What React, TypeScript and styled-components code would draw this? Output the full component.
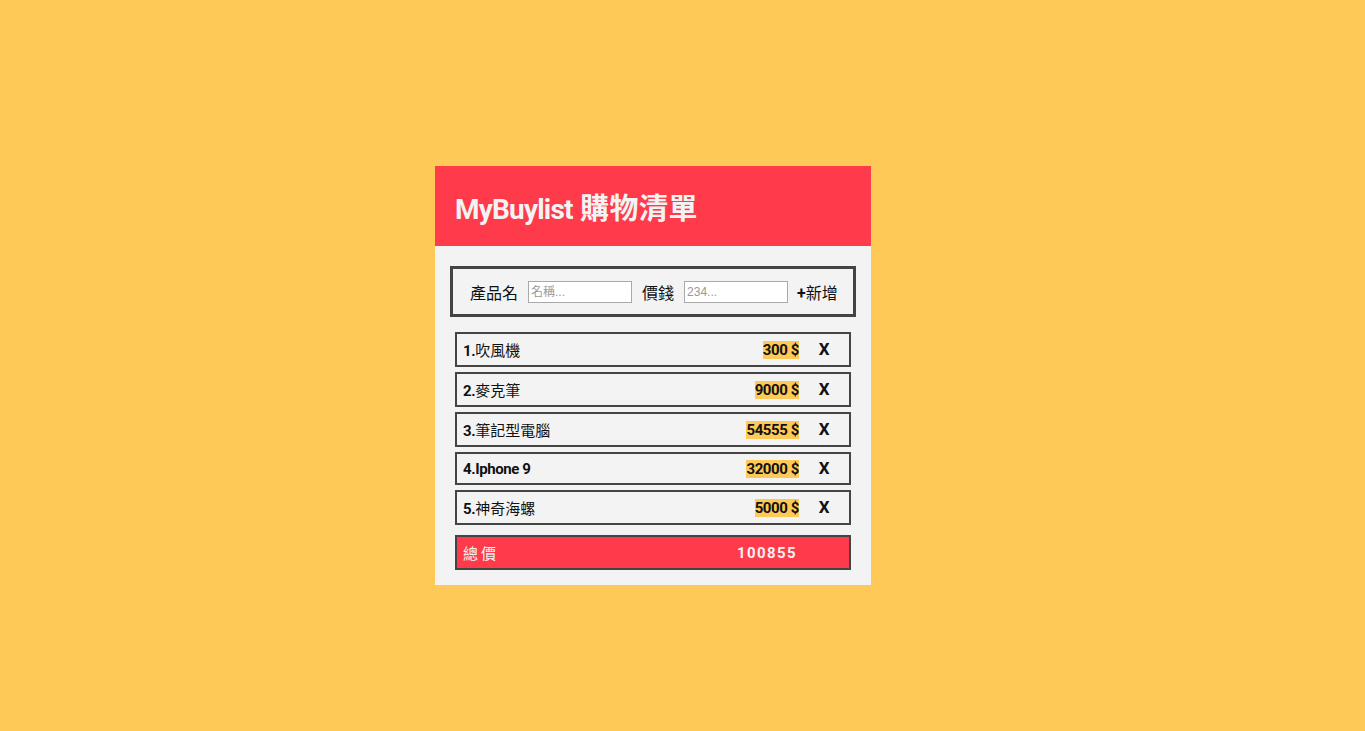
import React from "react";
import styled, { createGlobalStyle } from "styled-components";

const GlobalStyle = createGlobalStyle`
  html, body {
    margin: 0;
    padding: 0;
    background: #ffc957;
    font-family: "Roboto", "Noto Sans CJK TC", sans-serif;
  }
`;

const items = [
  { name: "吹風機", price: 300 },
  { name: "麥克筆", price: 9000 },
  { name: "筆記型電腦", price: 54555 },
  { name: "Iphone 9", price: 32000 },
  { name: "神奇海螺", price: 5000 },
];

const splitRuns = (text: string) =>
  text.match(/[\u3400-\u9fff]+|[^\u3400-\u9fff]+/g) || [];

const App = () => {
  const total = items.reduce((sum, it) => sum + it.price, 0);
  return (
    <>
      <GlobalStyle />
      <Page>
        <Card>
          <Header>
            <Title>
              MyBuylist <Cjk>購物清單</Cjk>
            </Title>
          </Header>
          <Body>
            <AddForm>
              <Label>產品名</Label>
              <Input placeholder="名稱..." />
              <Label>價錢</Label>
              <Input placeholder="234..." />
              <AddButton>
                <b>+</b>新增
              </AddButton>
            </AddForm>
            <List>
              {items.map((it, i) => (
                <Item key={i}>
                  <ItemName>
                    {i + 1}.
                    {splitRuns(it.name).map((run, j) => (
                      <Run key={j} $cjk={/[\u3400-\u9fff]/.test(run)}>
                        {run}
                      </Run>
                    ))}
                  </ItemName>
                  <Price>{it.price} $</Price>
                  <Remove>X</Remove>
                </Item>
              ))}
            </List>
            <Total>
              <TotalLabel>總價</TotalLabel>
              <TotalValue>{total}</TotalValue>
            </Total>
          </Body>
        </Card>
      </Page>
    </>
  );
};
export default App;

const Page = styled.div`
  min-height: 731px;
  padding: 166px 0 0 435px;
  box-sizing: border-box;
`;

const Card = styled.div`
  width: 436px;
  background: #f3f3f3;
`;

const Header = styled.div`
  height: 80px;
  background: #ff3b4b;
  display: flex;
  align-items: center;
  padding: 0 20px;
  box-sizing: border-box;
`;

const Title = styled.h1`
  margin: 0;
  font-size: 28px;
  font-weight: 700;
  color: #f3f3f3;
  letter-spacing: -0.8px;
`;

const Cjk = styled.span`
  font-size: 29px;
  letter-spacing: 0.5px;
  font-weight: 700;
  margin-left: 1px;
`;

const Body = styled.div`
  padding: 20px 15px 15px;
  display: flex;
  flex-direction: column;
`;

const AddForm = styled.div`
  height: 51px;
  box-sizing: border-box;
  border: 3px solid #444;
  display: flex;
  align-items: center;
  padding: 0 0 0 17px;
  margin-bottom: 15px;
`;

const Label = styled.span`
  font-size: 16px;
  color: #111;
  margin-right: 10px;
`;

const Input = styled.input`
  width: 104px;
  height: 22px;
  box-sizing: border-box;
  border: 1px solid #a9a9a9;
  background: #fff;
  padding: 1px 2px;
  font-size: 12px;
  font-family: "Liberation Sans", "Noto Sans CJK TC", sans-serif;
  margin-right: 10px;
  outline: none;

  &::placeholder {
    color: #999;
  }
`;

const AddButton = styled.span`
  font-size: 16px;
  color: #111;
  margin-left: -1px;
  cursor: pointer;

  b {
    font-weight: 700;
  }
`;

const List = styled.div`
  display: flex;
  flex-direction: column;
  gap: 5px;
  padding: 0 5px;
  margin-bottom: 10px;
`;

const Item = styled.div`
  border: 2px solid #444;
  display: flex;
  align-items: center;
  padding: 5px 0 5px 6px;
  font-size: 15px;
  letter-spacing: -0.4px;
  color: #111;
`;

const ItemName = styled.div`
  flex: 1;
  font-weight: 700;
`;

const Run = styled.span<{ $cjk: boolean }>`
  font-weight: ${(p) => (p.$cjk ? 400 : 700)};
  letter-spacing: ${(p) => (p.$cjk ? "0" : "-0.4px")};
`;

const Price = styled.span`
  background: #ffc957;
  font-weight: 700;
  font-size: 15px;
  line-height: 18px;
`;

const Remove = styled.span`
  width: 50px;
  text-align: center;
  font-weight: 700;
  font-size: 17px;
  line-height: 19px;
  cursor: pointer;
`;

const Total = styled.div`
  margin: 0 5px;
  border: 2px solid #444;
  background: #ff3b4b;
  color: #f3f3f3;
  display: flex;
  align-items: center;
  padding: 5px 52px 5px 6px;
  font-size: 15px;
`;

const TotalLabel = styled.span`
  flex: 1;
  letter-spacing: 3px;
`;

const TotalValue = styled.span`
  font-weight: 700;
  letter-spacing: 1.4px;
`;
